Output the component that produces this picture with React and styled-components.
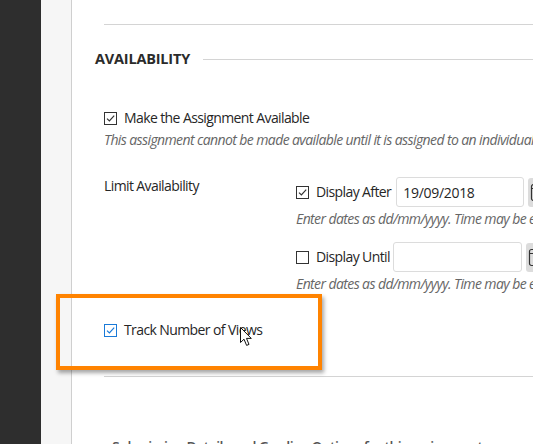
import React from 'react';
import styled, { createGlobalStyle } from 'styled-components';

const GlobalStyle = createGlobalStyle`
  html, body {
    margin: 0;
    padding: 0;
    background: #fff;
    overflow: hidden;
  }
  body {
    font-family: 'Open Sans', 'Liberation Sans', sans-serif;
    font-size: 14px;
    letter-spacing: -0.6px;
    color: #262626;
  }
`;

const App = () => {
  return (
    <>
      <GlobalStyle />
      <Page>
        <Sidebar />
        <Gutter />
        <Main>
          <Rule />
          <SectionHeader>
            <SectionTitle>AVAILABILITY</SectionTitle>
            <HeaderLine />
          </SectionHeader>
          <Body>
            <CheckRow $top={39}>
              <Checkbox checked />
              <span>Make the Assignment Available</span>
            </CheckRow>
            <Helper $top={2}>
              This assignment cannot be made available until it is assigned to an individual or a group.
            </Helper>

            <LimitGrid>
              <FieldLabel>Limit Availability</FieldLabel>
              <Fields>
                <DateRow>
                  <Checkbox checked />
                  <DateLabel>Display After</DateLabel>
                  <DateInput defaultValue="19/09/2018" />
                  <CalendarButton>
                    <CalendarIcon />
                  </CalendarButton>
                </DateRow>
                <Helper $top={2}>
                  Enter dates as dd/mm/yyyy. Time may be entered in any format.
                </Helper>
                <DateRow $top={13}>
                  <Checkbox />
                  <DateLabel>Display Until</DateLabel>
                  <DateInput $narrow defaultValue="" />
                  <CalendarButton>
                    <CalendarIcon />
                  </CalendarButton>
                </DateRow>
                <Helper $top={2}>
                  Enter dates as dd/mm/yyyy. Time may be entered in any format.
                </Helper>
              </Fields>
            </LimitGrid>

            <TrackRow>
              <Highlight />
              <Checkbox checked $blue />
              <span>Track Number of Views</span>
              <Cursor />
            </TrackRow>
          </Body>
          <Rule $top={36} />
          <NextSection>
            <span>Submission Details and Grading Options for this assignment</span>
          </NextSection>
        </Main>
      </Page>
    </>
  );
};

export default App;

function Checkbox({ checked, $blue }) {
  const color = $blue ? '#1a7ad8' : '#333';
  return (
    <Box $blue={$blue}>
      {checked && (
        <svg width="11" height="11" viewBox="0 0 11 11">
          <path d="M2 5.6 L4.4 8 L9.2 2.6" fill="none" stroke={color} strokeWidth="1.2" />
        </svg>
      )}
    </Box>
  );
}

function CalendarIcon() {
  return (
    <svg width="10" height="20" viewBox="0 0 10 20">
      <rect x="1.5" y="2.5" width="12" height="16" rx="2" fill="none" stroke="#333" strokeWidth="1.2" />
      <line x1="1.5" y1="6.5" x2="10" y2="6.5" stroke="#333" strokeWidth="1" />
    </svg>
  );
}

function Cursor() {
  return (
    <CursorWrap>
      <svg width="13" height="20" viewBox="0 0 13 20">
        <path
          d="M0.5 0.5 L0.5 15.5 L4 12.2 L6.6 18.4 L9 17.4 L6.5 11.4 L11.3 11.4 Z"
          fill="#fff"
          stroke="#111"
          strokeWidth="1"
          strokeLinejoin="miter"
        />
      </svg>
    </CursorWrap>
  );
}

const Page = styled.div`
  display: flex;
  width: 533px;
  height: 444px;
  overflow: hidden;
`;

const Sidebar = styled.div`
  flex: 0 0 41px;
  background: #2e2e2e;
`;

const Gutter = styled.div`
  flex: 0 0 30px;
  background: #f6f6f6;
  border-right: 1px solid #cfcfcf;
`;

const Main = styled.div`
  flex: 1;
  display: flex;
  flex-direction: column;
  padding: 24px 0 0 23px;
  min-width: 0;
  background: #fff;
`;

const Rule = styled.div`
  margin: ${(p) => p.$top || 0}px 0 0 9px;
  border-top: 1px solid #d4d4d4;
`;

const SectionHeader = styled.div`
  display: flex;
  align-items: center;
  gap: 13px;
  margin-top: 24px;
  height: 20px;
`;

const SectionTitle = styled.h2`
  margin: 0;
  font-size: 14.5px;
  font-weight: 700;
  letter-spacing: -0.2px;
  color: #2b2b2b;
  line-height: 20px;
`;

const HeaderLine = styled.div`
  flex: 1;
  border-top: 1px solid #d4d4d4;
`;

const Body = styled.div`
  padding-left: 9px;
  display: flex;
  flex-direction: column;
`;

const CheckRow = styled.label`
  display: flex;
  align-items: center;
  gap: 7px;
  margin-top: ${(p) => p.$top || 0}px;
  line-height: 20px;
  white-space: nowrap;
`;

const Box = styled.span`
  flex: 0 0 auto;
  width: 13px;
  height: 13px;
  box-sizing: border-box;
  border: 1px solid ${(p) => (p.$blue ? '#1a7ad8' : '#333')};
  background: #fff;
  display: flex;
  align-items: center;
  justify-content: center;
`;

const Helper = styled.div`
  margin-top: ${(p) => p.$top || 0}px;
  font-style: italic;
  color: #666;
  line-height: 20px;
  white-space: nowrap;
`;

const LimitGrid = styled.div`
  display: grid;
  grid-template-columns: 192px 1fr;
  margin-top: 27px;
`;

const FieldLabel = styled.div`
  line-height: 20px;
  margin-top: -1px;
`;

const Fields = styled.div`
  display: flex;
  flex-direction: column;
  min-width: 0;
`;

const DateRow = styled.div`
  display: flex;
  align-items: center;
  height: 30px;
  margin-top: ${(p) => p.$top || 0}px;
  white-space: nowrap;
`;

const DateLabel = styled.span`
  margin-left: 7px;
  line-height: 20px;
`;

const DateInput = styled.input`
  flex: 0 0 auto;
  box-sizing: border-box;
  width: ${(p) => (p.$narrow ? 129 : 128)}px;
  height: 30px;
  margin-left: ${(p) => (p.$narrow ? 3 : 5)}px;
  padding: 0 6px;
  border: 1px solid #dcdcdc;
  border-radius: 3px;
  font-family: 'Open Sans', 'Liberation Sans', sans-serif;
  font-size: 14px;
  letter-spacing: -0.3px;
  color: #262626;
  background: #fff;
  outline: none;
`;

const CalendarButton = styled.span`
  flex: 0 0 auto;
  display: flex;
  align-items: center;
  width: 20px;
  height: 29px;
  margin-left: 4px;
  padding-left: 2px;
  background: #dcdcdc;
  border-radius: 3px 0 0 3px;
`;

const TrackRow = styled.label`
  position: relative;
  display: flex;
  align-items: center;
  gap: 7px;
  margin-top: 26px;
  line-height: 20px;
  white-space: nowrap;
`;

const Highlight = styled.span`
  position: absolute;
  left: -48px;
  top: -26px;
  width: 266px;
  height: 76px;
  box-sizing: border-box;
  border: 4px solid #ff8300;
  box-shadow: 2px 3px 4px rgba(0, 0, 0, 0.35);
  pointer-events: none;
`;

const CursorWrap = styled.span`
  position: absolute;
  left: 136px;
  top: 7px;
  line-height: 0;
`;

const NextSection = styled.div`
  margin: 60px 0 0 17px;
  line-height: 20px;
  font-weight: 600;
  color: #555;
  white-space: nowrap;
`;
